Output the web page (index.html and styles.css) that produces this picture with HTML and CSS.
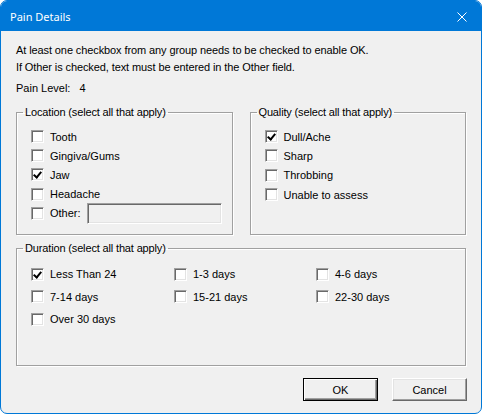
FILE: index.html
```html
<!doctype html>
<html>
<head>
 <title>Pain Details</title>
 <meta name=viewport content="width=device-width, initial-scale=1">
 <link rel="stylesheet" href="styles.css">
</head>
<body>
<div class=dlg>
 <div class=caption>
  <span class=ttl>Pain Details</span>
  <svg class=close width=10 height=10 viewBox="0 0 10 10">
   <path d="M0.5 0.5 L9.5 9.5 M9.5 0.5 L0.5 9.5" stroke="#fff" stroke-width="1" fill="none"/>
  </svg>
 </div>
 <div class=client>
  <div class=note>At least one checkbox from any group needs to be checked to enable OK.</div>
  <div class=note>If Other is checked, text must be entered in the Other field.</div>
  <div class=level><span>Pain Level:</span><span>4</span></div>

  <div class=groups>
   <fieldset class=grp>
    <legend>Location (select all that apply)</legend>
    <label class=chk><span class=box></span>Tooth</label>
    <label class=chk><span class=box></span>Gingiva/Gums</label>
    <label class=chk><span class="box on"></span>Jaw</label>
    <label class=chk><span class=box></span>Headache</label>
    <label class=chk><span class=box></span>Other:<span class=edit></span></label>
   </fieldset>
   <fieldset class=grp>
    <legend>Quality (select all that apply)</legend>
    <label class=chk><span class="box on"></span>Dull/Ache</label>
    <label class=chk><span class=box></span>Sharp</label>
    <label class=chk><span class=box></span>Throbbing</label>
    <label class=chk><span class=box></span>Unable to assess</label>
   </fieldset>
  </div>

  <fieldset class="grp dur">
   <legend>Duration (select all that apply)</legend>
   <div class=cols>
    <label class=chk><span class="box on"></span>Less Than 24</label>
    <label class=chk><span class=box></span>1-3 days</label>
    <label class=chk><span class=box></span>4-6 days</label>
    <label class=chk><span class=box></span>7-14 days</label>
    <label class=chk><span class=box></span>15-21 days</label>
    <label class=chk><span class=box></span>22-30 days</label>
    <label class=chk><span class=box></span>Over 30 days</label>
   </div>
  </fieldset>

  <div class=btns>
   <button class="btn def">OK</button>
   <button class=btn>Cancel</button>
  </div>
 </div>
</div>
</body>
</html>
```

FILE: styles.css
```css
body {margin:0; background:#fff; font-family:"Liberation Sans", Arial, sans-serif; font-size:11px; color:#000;}
.dlg {
  width:480px;
  height:412px;
  border:1px solid #0078d7;
  border-radius:7px;
  background:#f0f0f0;
  overflow:hidden;
  display:flex;
  flex-direction:column;
}
.caption {
  height:30px;
  background:#0078d7;
  display:flex;
  align-items:center;
  justify-content:space-between;
  padding:0 14px 0 9px;
  color:#fff;
}
.ttl {font-family:"Noto Sans", "Open Sans", sans-serif; font-size:11px; padding-top:1px;}
.close {margin-top:1px;}
.client {padding:11px 15px 0 15px; display:flex; flex-direction:column;}
.note {line-height:17px; letter-spacing:-0.1px;}
.level {margin-top:6px; line-height:13px; display:flex; gap:9px;}
.groups {display:flex; gap:17px; margin-top:11px;}
.grp {
  margin:0;
  min-width:0;
  border:1px solid #a0a0a0;
  box-shadow:inset 1px 1px 0 #fff, 1px 1px 0 #fff;
  padding:8px 0 11px 14px;
  display:flex;
  flex-direction:column;
}
.groups .grp {width:217px; box-sizing:border-box; height:129px;}
.grp legend {padding:0 2px; margin-left:-8px; line-height:13px; letter-spacing:-0.15px;}
.chk {height:19.3px; display:flex; align-items:center; white-space:nowrap;}
.box {
  width:13px;
  height:13px;
  box-sizing:border-box;
  background:#fff;
  border-top:1px solid #a0a0a0;
  border-left:1px solid #a0a0a0;
  border-right:1px solid #fff;
  border-bottom:1px solid #fff;
  box-shadow:inset 1px 1px 0 #696969, inset -1px -1px 0 #e3e3e3;
  margin-right:6px;
  position:relative;
}
.box.on::after {
  content:"";
  position:absolute;
  left:3px;
  top:1px;
  width:3px;
  height:6px;
  border-right:2px solid #000;
  border-bottom:2px solid #000;
  transform:rotate(40deg);
}
.edit {
  width:135px;
  height:21px;
  box-sizing:border-box;
  margin-left:6px;
  border-top:1px solid #a0a0a0;
  border-left:1px solid #a0a0a0;
  border-right:1px solid #fff;
  border-bottom:1px solid #fff;
  box-shadow:inset 1px 1px 0 #696969, inset -1px -1px 0 #e3e3e3;
  background:#f0f0f0;
}
.dur {margin-top:7px; height:124px; box-sizing:border-box; width:450px; padding-top:8px;}
.cols {display:grid; grid-template-columns:143px 142px auto;}
.cols .chk {height:22.5px;}
.btns {display:flex; justify-content:flex-end; gap:14px; margin-top:12px;}
.btn {
  width:75px;
  height:23px;
  padding:0;
  font-family:inherit;
  font-size:11px;
  background:#f0f0f0;
  border-top:1px solid #fff;
  border-left:1px solid #fff;
  border-right:1px solid #696969;
  border-bottom:1px solid #696969;
  box-shadow:inset -1px -1px 0 #a0a0a0, inset 1px 1px 0 #e3e3e3;
  outline:none;
}
.btn.def {border:1px solid #000; box-shadow:inset 1px 1px 0 #fff, inset -1px -1px 0 #696969, inset -2px -2px 0 #a0a0a0;}
.btn:last-child {margin-right:-1px;}
```
